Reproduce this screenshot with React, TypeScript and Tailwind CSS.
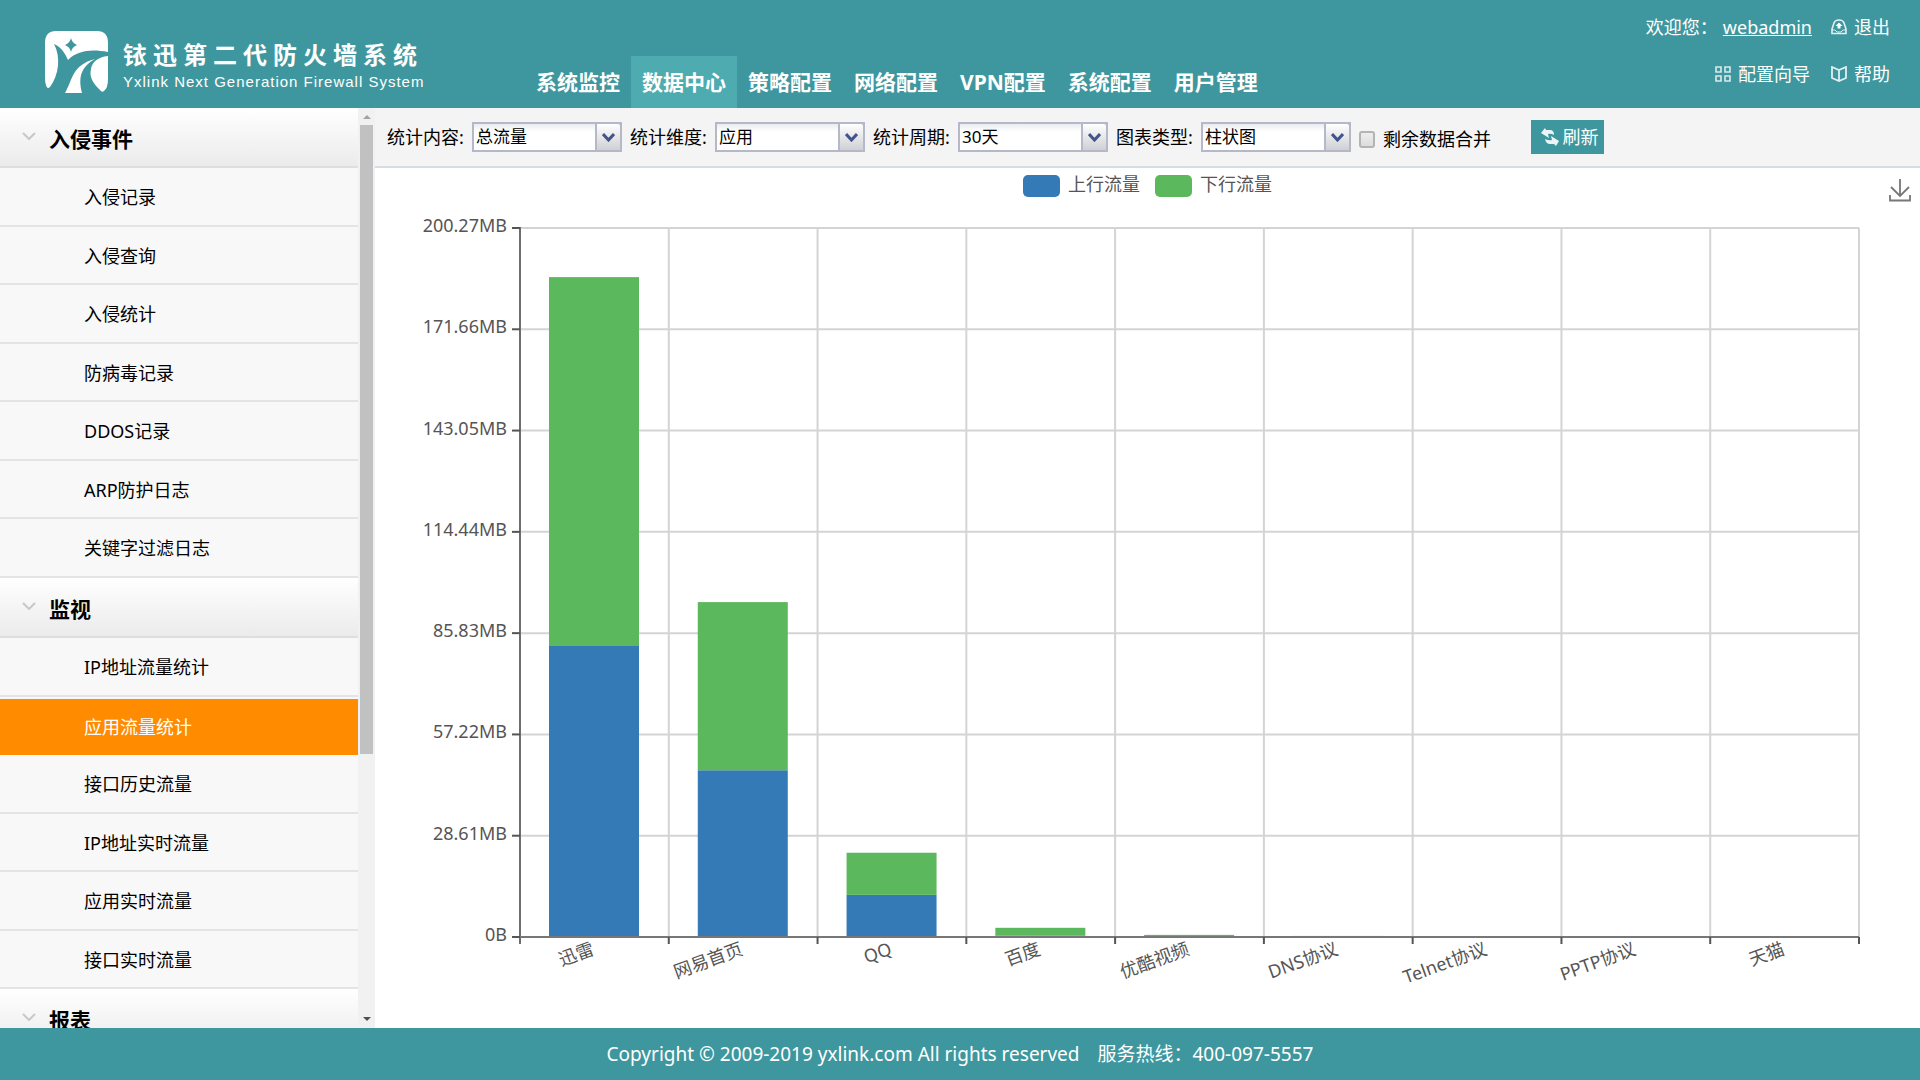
import { useState } from "react";

const navItems = [
  "系统监控",
  "数据中心",
  "策略配置",
  "网络配置",
  "VPN配置",
  "系统配置",
  "用户管理",
];

const menu = [
  {
    title: "入侵事件",
    items: [
      "入侵记录",
      "入侵查询",
      "入侵统计",
      "防病毒记录",
      "DDOS记录",
      "ARP防护日志",
      "关键字过滤日志",
    ],
  },
  {
    title: "监视",
    items: [
      "IP地址流量统计",
      "应用流量统计",
      "接口历史流量",
      "IP地址实时流量",
      "应用实时流量",
      "接口实时流量",
    ],
  },
  { title: "报表", items: [] },
];

const filters = [
  { id: "content", label: "统计内容:", options: ["总流量", "上行流量", "下行流量"] },
  { id: "dimension", label: "统计维度:", options: ["应用", "IP地址", "接口"] },
  { id: "period", label: "统计周期:", options: ["30天", "7天", "1天"] },
  { id: "chart", label: "图表类型:", options: ["柱状图", "饼图"] },
];

// traffic in MB
const traffic = [
  { name: "迅雷", up: 82.2, down: 104.2 },
  { name: "网易首页", up: 47.1, down: 47.5 },
  { name: "QQ", up: 11.9, down: 11.9 },
  { name: "百度", up: 0.4, down: 2.2 },
  { name: "优酷视频", up: 0, down: 0.6 },
  { name: "DNS协议", up: 0, down: 0.3 },
  { name: "Telnet协议", up: 0, down: 0 },
  { name: "PPTP协议", up: 0, down: 0 },
  { name: "天猫", up: 0, down: 0 },
];

const yLabels = [
  "0B",
  "28.61MB",
  "57.22MB",
  "85.83MB",
  "114.44MB",
  "143.05MB",
  "171.66MB",
  "200.27MB",
];

const MAX = 200.27;
const LEFT = 145;
const RIGHT = 1484;
const TOP = 24;
const BOTTOM = 733;

function Logo() {
  return (
    <svg viewBox="0 0 64 64" className="h-16 w-16 shrink-0" aria-hidden="true">
      <path
        d="M11 0H52Q63 0 63 12V21C47 18 33 19 23 29C20 22 16 16 9 13C16 26 14 44 5 56Q2 59 1 54Q0 52 0 47V12Q0 0 11 0Z"
        fill="#fff"
      />
      <path d="M26 7Q27 12 32 14Q27 16 26 21Q25 16 20 14Q25 12 26 7Z" fill="#3e979e" />
      <path d="M20 62C28 48 27 34 50 28C36 36 33 46 37 62Z" fill="#fff" />
      <path d="M63 25V48Q63 57 59 60Q57 62 55 59C48 52 44 46 46 38C47 31 53 26 63 25Z" fill="#fff" />
    </svg>
  );
}

function LogoutIcon() {
  return (
    <svg viewBox="0 0 16 16" className="h-4 w-4" fill="none" stroke="#fff" strokeOpacity="0.85" strokeWidth="1.600">
      <path d="M1 10L3 4Q4 1 8 1Q12 1 13 4L15 10V14.500H1Z" />
      <path d="M1 11H4L6 13H10L12 11H15" strokeWidth="1" />
      <path d="M8 3.500L11.500 7H9.500V9.500H6.500V7H4.500Z" fill="#fff" stroke="none" />
    </svg>
  );
}

function GridIcon() {
  return (
    <svg viewBox="0 0 16 16" className="h-4 w-4" fill="none" stroke="#fff" strokeOpacity="0.8" strokeWidth="1.600">
      <path d="M1 1H6V6H1ZM10 1H15V6H10ZM1 10H6V15H1ZM10 10H15V15H10Z" />
    </svg>
  );
}

function BookIcon() {
  return (
    <svg viewBox="0 0 16 16" className="h-4 w-4" fill="none" stroke="#fff" strokeOpacity="0.85" strokeWidth="1.800">
      <path d="M1 1L8 4L15 1V12L8 15L1 12ZM8 4V15" />
    </svg>
  );
}

function Header() {
  const [active, setActive] = useState("数据中心");

  return (
    <header className="flex h-[108px] shrink-0 bg-[#3e979e] text-white">
      <div className="flex w-[525px] shrink-0 items-start gap-[14px] pt-[31px] pl-[45px]">
        <Logo />
        <div className="pt-[9px] whitespace-nowrap">
          <div className="text-[24px] leading-[30px] font-bold tracking-[6px]">铱迅第二代防火墙系统</div>
          <div className="font-['Liberation_Sans',Arial,sans-serif] text-[15px] leading-[24px] tracking-[1px]">
            Yxlink Next Generation Firewall System
          </div>
        </div>
      </div>

      <nav className="flex flex-1 items-end">
        {navItems.map((item) => (
          <button
            key={item}
            onClick={() => setActive(item)}
            className={`h-[52px] cursor-pointer px-[11px] pt-[2px] text-[21px] font-bold whitespace-nowrap ${
              item === active ? "bg-[#4eacb1]" : ""
            }`}
          >
            {item}
          </button>
        ))}
      </nav>

      <div className="flex flex-col items-end gap-[19px] pt-[13px] pr-[30px] text-[18px] leading-[28px] whitespace-nowrap">
        <div className="flex items-center">
          <span>欢迎您：</span>
          <a href="#user" className="ml-[5px] underline">
            webadmin
          </a>
          <a href="#logout" className="ml-[19px] flex items-center gap-[7px]">
            <LogoutIcon />
            退出
          </a>
        </div>
        <div className="flex items-center gap-[21px]">
          <a href="#wizard" className="flex items-center gap-[7px]">
            <GridIcon />
            配置向导
          </a>
          <a href="#help" className="flex items-center gap-[7px]">
            <BookIcon />
            帮助
          </a>
        </div>
      </div>
    </header>
  );
}

function Sidebar() {
  const [active, setActive] = useState("应用流量统计");

  return (
    <aside className="flex w-[375px] shrink-0 overflow-hidden">
      <div className="flex-1 overflow-hidden">
        {menu.map((group) => (
          <section key={group.title}>
            <h2>
              <button className="flex h-[60px] w-full cursor-pointer items-center border-b-2 border-[#dedede] bg-linear-to-b from-white to-[#ebebeb] pt-[6px] pl-[22px] text-[21px] font-bold">
                <svg viewBox="0 0 14 8" className="mr-[13px] mb-[8px] h-2 w-[14px]" fill="none" stroke="#c8c8c8" strokeWidth="2">
                  <path d="M1 1L7 7L13 1" />
                </svg>
                {group.title}
              </button>
            </h2>
            <ul>
              {group.items.map((item) => (
                <li key={item} className="h-[59px] bg-[#f8f8f8] even:h-[58px]">
                  <a
                    href="#menu"
                    onClick={() => setActive(item)}
                    className={`flex h-full items-center pl-[84px] text-[18px] ${
                      item === active
                        ? "border-t-2 border-[#f8f8f8] bg-[#ff8c00] text-white"
                        : "border-b-2 border-[#e4e4e4] pt-[2px]"
                    }`}
                  >
                    {item}
                  </a>
                </li>
              ))}
            </ul>
          </section>
        ))}
      </div>

      <div className="flex w-[17px] flex-col items-center bg-[#f1f1f1]">
        <svg viewBox="0 0 8 5" className="mt-[6px] mb-[6px] h-[5px] w-2 shrink-0" fill="#a3a3a3">
          <path d="M0 5L4 1L8 5Z" />
        </svg>
        <div className="h-[629px] w-[13px] bg-[#c1c1c1]" />
        <svg viewBox="0 0 8 5" className="mt-auto mb-[6px] h-[5px] w-2 shrink-0" fill="#505050">
          <path d="M0 0L4 4L8 0Z" />
        </svg>
      </div>
    </aside>
  );
}

function Toolbar() {
  const [merge, setMerge] = useState(false);

  return (
    <form
      onSubmit={(e) => e.preventDefault()}
      className="flex h-[60px] shrink-0 items-center border-b-2 border-[#d5dce3] bg-[#f4f4f4] pl-[12px] text-[18px] whitespace-nowrap"
    >
      {filters.map((f) => (
        <div key={f.id} className="mr-[8px] flex items-center">
          <label htmlFor={f.id} className="w-[85px]">
            {f.label}
          </label>
          <div className="relative w-[150px]">
            <select
              id={f.id}
              className="block h-[30px] w-full appearance-none border-2 border-[#b5b8c8] bg-linear-to-b from-[#e9edf0] to-white to-30% pl-[2px] text-[17px] leading-[24px]"
            >
              {f.options.map((o) => (
                <option key={o}>{o}</option>
              ))}
            </select>
            <span className="pointer-events-none absolute inset-y-0 right-0 flex w-[27px] items-center justify-center rounded-tr-sm border-2 border-[#b5b8c8] bg-linear-to-b from-white to-[#cfd0d4]">
              <svg viewBox="0 0 13 9" className="h-[9px] w-[13px]" fill="none" stroke="#41548c" strokeWidth="3">
                <path d="M1 1L6.500 7L12 1" />
              </svg>
            </span>
          </div>
        </div>
      ))}

      <input
        id="merge"
        type="checkbox"
        checked={merge}
        onChange={(e) => setMerge(e.target.checked)}
        className="mt-[4px] h-[17px] w-4 appearance-none rounded-[3px] border-2 border-[#b4b4b4] bg-linear-to-b from-[#eeeeee] to-[#dcdcdc] checked:bg-[#3e979e]"
      />
      <label htmlFor="merge" className="mt-[4px] ml-[8px]">
        剩余数据合并
      </label>

      <button className="ml-[40px] flex h-[34px] w-[73px] cursor-pointer items-center justify-center gap-[3px] bg-[#3e979e] pl-[3px] text-white">
        <svg viewBox="0 0 20 20" className="h-5 w-5" fill="#fff" fillOpacity="0.9">
          <path d="M1 6L5 1L6 3H10Q14 3 14 8Q11 6 8 7L9 11Z" />
          <path d="M19 14L16 19L14 17H10Q6 17 5 12Q9 14 12 13L11 9Z" />
        </svg>
        刷新
      </button>
    </form>
  );
}

function TrafficChart() {
  const cell = (RIGHT - LEFT) / traffic.length;
  const step = (BOTTOM - TOP) / (yLabels.length - 1);
  const scale = (BOTTOM - TOP) / MAX;

  return (
    <svg viewBox="0 0 1545 824" className="min-h-0 w-full flex-1" role="img" aria-label="应用流量统计">
      {yLabels.map((label, i) => (
        <line key={label} x1={LEFT} x2={RIGHT} y1={BOTTOM - i * step} y2={BOTTOM - i * step} stroke="#d4d4d4" strokeWidth="2" />
      ))}
      {traffic.map((t, i) => (
        <line
          key={t.name}
          x1={LEFT + (i + 1) * cell}
          x2={LEFT + (i + 1) * cell}
          y1={TOP}
          y2={BOTTOM}
          stroke="#d4d4d4"
          strokeWidth="2"
        />
      ))}

      {traffic.map((t, i) => {
        const x = LEFT + i * cell + 29;
        const up = t.up * scale;
        const down = t.down * scale;
        return (
          <g key={t.name}>
            <rect x={x} y={BOTTOM - up} width="90" height={up} fill="#337ab7" />
            <rect x={x} y={BOTTOM - up - down} width="90" height={down} fill="#5cb85c" />
          </g>
        );
      })}

      <line x1={LEFT} x2={LEFT} y1={TOP - 1} y2={BOTTOM + 7} stroke="#6e6e6e" strokeWidth="2" />
      <line x1={LEFT} x2={RIGHT} y1={BOTTOM} y2={BOTTOM} stroke="#777" strokeWidth="2" />
      {yLabels.map((label, i) => (
        <g key={label}>
          <line x1={LEFT - 8} x2={LEFT} y1={BOTTOM - i * step} y2={BOTTOM - i * step} stroke="#555" strokeWidth="2" />
          <text x={LEFT - 13} y={BOTTOM - i * step + 4} textAnchor="end" fill="#555" fontSize="18">
            {label}
          </text>
        </g>
      ))}
      {traffic.map((t, i) => {
        const center = LEFT + (i + 0.5) * cell;
        return (
          <g key={t.name}>
            <line
              x1={LEFT + (i + 1) * cell}
              x2={LEFT + (i + 1) * cell}
              y1={BOTTOM}
              y2={BOTTOM + 7}
              stroke="#555"
              strokeWidth="2"
            />
            <text
              transform={`translate(${center + 1} ${BOTTOM + 17}) rotate(-20)`}
              textAnchor="end"
              fill="#555"
              fontSize="18"
            >
              {t.name}
            </text>
          </g>
        );
      })}
    </svg>
  );
}

export default function App() {
  return (
    <div className="flex h-screen flex-col overflow-hidden bg-white font-['Noto_Sans','Noto_Sans_CJK_SC',sans-serif] text-black">
      <Header />

      <div className="flex min-h-0 flex-1">
        <Sidebar />
        <main className="flex min-w-0 flex-1 flex-col">
          <Toolbar />
          <div className="relative flex min-h-0 flex-1 flex-col">
            <div className="flex h-9 shrink-0 items-center justify-center gap-[15px] text-[18px] leading-[24px] text-[#555]">
              <span className="flex items-center gap-[8px]">
                <i className="h-[22px] w-[37px] rounded-[5px] bg-[#337ab7]" />
                <span className="pb-[4px]">上行流量</span>
              </span>
              <span className="flex items-center gap-[8px]">
                <i className="h-[22px] w-[37px] rounded-[5px] bg-[#5cb85c]" />
                <span className="pb-[4px]">下行流量</span>
              </span>
            </div>
            <button aria-label="下载" className="absolute top-[10px] right-[9px] cursor-pointer">
              <svg viewBox="0 0 22 24" className="h-6 w-[22px]" fill="none" stroke="#777" strokeWidth="1.800">
                <path d="M11 1V18M2 9L11 18L20 9M1 17V22.500H21V17" />
              </svg>
            </button>
            <TrafficChart />
          </div>
        </main>
      </div>

      <footer className="flex h-[52px] shrink-0 items-center justify-center gap-[18px] bg-[#3e979e] text-[19px] text-white">
        <span>Copyright © 2009-2019 yxlink.com All rights reserved</span>
        <span>服务热线：400-097-5557</span>
      </footer>
    </div>
  );
}
